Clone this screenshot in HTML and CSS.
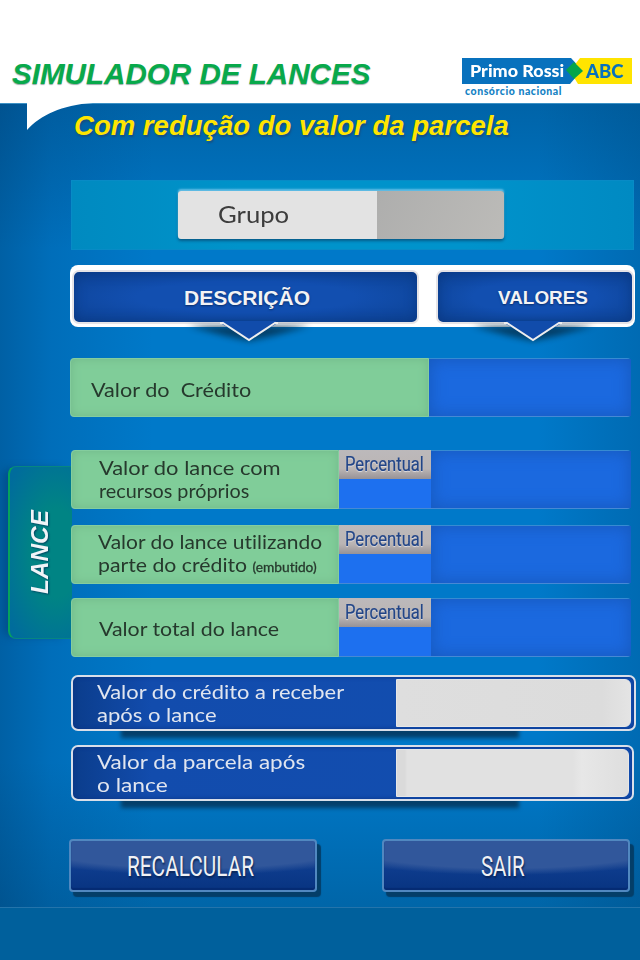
FILE: index.html
```html
<!DOCTYPE html>
<html lang="pt-BR">
<head>
<meta charset="utf-8">
<title>Simulador de Lances</title>
<link rel="stylesheet" href="styles.css">
</head>
<body>
<div class="page">
  <header class="header">
    <h1 class="title">SIMULADOR DE LANCES</h1>
    <div class="brand">
      <div class="brand-bar">
        <svg class="brand-shape" width="171" height="28" viewBox="0 0 171 28">
          <path d="M0 1H109L120 13L108 27H0Z" fill="#0871bd"/>
          <path d="M118 1H170V27H116L108 14Z" fill="#ffe400"/>
          <path d="M112 5L121 14L112 22L104 13Z" fill="#04a54a"/>
        </svg>
        <span class="brand-name">Primo Rossi</span>
        <span class="brand-abc">ABC</span>
      </div>
      <div class="brand-sub">consórcio nacional</div>
    </div>
  </header>

  <main class="stage">
    <svg class="notch" width="66" height="28" viewBox="0 0 66 28"><path d="M0 0H66C34 2 14 12 0 27Z" fill="#fff"/></svg>
    <h2 class="subtitle">Com redução do valor da parcela</h2>

    <section class="group">
      <div class="group-box">
        <div class="group-label"><span>Grupo</span></div>
        <div class="group-value"></div>
      </div>
    </section>

    <section class="heads">
      <div class="head head-desc"><span>DESCRIÇÃO</span>
        <svg class="arrow" width="150" height="26" viewBox="0 0 150 26"><path class="arrow-shadow" d="M14 5H136L98 15L75 20L52 15Z"/><path d="M48 3L75 19L102 3V0H48Z" fill="#114cab"/><path d="M46 2H49L75 19L101 2H104" fill="none" stroke="#eee" stroke-width="2"/></svg>
      </div>
      <div class="head head-val"><span>VALORES</span>
        <svg class="arrow" width="150" height="26" viewBox="0 0 150 26"><path class="arrow-shadow" d="M14 5H136L98 15L75 20L52 15Z"/><path d="M48 3L75 19L102 3V0H48Z" fill="#114cab"/><path d="M46 2H49L75 19L101 2H104" fill="none" stroke="#eee" stroke-width="2"/></svg>
      </div>
    </section>

    <div class="row credit">
      <div class="desc"><span class="t1">Valor do&nbsp; Crédito</span></div>
      <div class="value"></div>
    </div>

    <section class="bids">
      <div class="tab"><span>LANCE</span></div>
      <div class="bid-rows">
        <div class="row first">
          <div class="desc"><span class="t2">Valor do lance com</span><span class="t3">recursos próprios</span></div>
          <div class="percent"><div class="percent-head"><span>Percentual</span></div></div>
          <div class="value"></div>
        </div>
        <div class="row second">
          <div class="desc"><span class="t4">Valor do lance utilizando</span><span class="t5">parte do crédito <small>(embutido)</small></span></div>
          <div class="percent"><div class="percent-head"><span>Percentual</span></div></div>
          <div class="value"></div>
        </div>
        <div class="row third">
          <div class="desc"><span class="t6">Valor total do lance</span></div>
          <div class="percent"><div class="percent-head"><span>Percentual</span></div></div>
          <div class="value"></div>
        </div>
      </div>
    </section>

    <section class="results">
      <div class="result">
        <div class="result-label"><span class="t7">Valor do crédito a receber</span><span class="t8">após o lance</span></div>
        <div class="result-value"></div>
      </div>
      <div class="result result-short">
        <div class="result-label"><span class="t9">Valor da parcela após</span><span class="t10">o lance</span></div>
        <div class="result-value"></div>
      </div>
    </section>

    <div class="actions">
      <button class="btn"><span class="b1">RECALCULAR</span></button>
      <button class="btn"><span class="b2">SAIR</span></button>
    </div>
  </main>
</div>
</body>
</html>
```
FILE: styles.css
```css
* { box-sizing: border-box; }
body { margin: 0; background: #00609c; }
.page { width: 640px; height: 960px; overflow: hidden; font-family: Lato, "Open Sans", sans-serif; font-variant-ligatures: none; }
span { display: inline-block; white-space: nowrap; transform-origin: 0 50%; }

.header { height: 103px; background: #fff; display: flex; justify-content: space-between; padding: 57px 8px 0 12px; }
.title { margin: 0; font: italic bold 29.6px/34px "Liberation Sans", sans-serif; color: #08a94b; text-shadow: 0 1px 1px #9aa; white-space: nowrap; }
.brand { width: 171px; }
.brand-bar { position: relative; height: 28px; display: flex; line-height: 28px; font-weight: 900; }
.brand-shape { position: absolute; left: 1px; top: 0; }
.brand-name { position: relative; width: 116px; margin-left: 9px; font-size: 17px; color: #fff; transform: scaleX(1.055); }
.brand-abc { position: relative; font-size: 18px; color: #0871bd; transform: scaleX(1.03); }
.brand-sub { font-size: 10.5px; line-height: 12px; font-weight: 900; color: #1582c4; padding-left: 4px; white-space: nowrap; letter-spacing: .55px; }

.stage {
  position: relative; height: 805px; border-top: 1px solid #3c91c5; border-bottom: 1px solid #2474ab;
  background:
    linear-gradient(90deg, rgba(0,55,105,.38), rgba(0,65,125,.2) 8%, transparent 24%, transparent 84%, rgba(0,65,115,.26)),
    linear-gradient(180deg, rgba(0,65,115,.38), transparent 18%, transparent 82%, rgba(0,70,115,.38)), #0079c9;
}
.notch { position: absolute; left: 27px; top: -1px; }
.subtitle { margin: 0; padding: 5px 0 0 74px; height: 76px; font: italic bold 27.55px/33px "Liberation Sans", sans-serif; color: #ffe500; text-shadow: 1px 2px 2px #174f80; white-space: nowrap; }

.group { margin-left: 71px; width: 563px; height: 70px; background: linear-gradient(90deg, #008ac0, #0093ca 30%, #0093cc 70%, #008ac2); border: 1px solid #088bc6; padding: 10px 0 0 106px; }
.group-box { width: 326px; height: 48px; display: flex; border-radius: 3px; overflow: hidden; box-shadow: 0 -2px 2px #62bde5, 0 2px 3px #075b88; }
.group-label { width: 199px; background: #e3e3e3; padding-left: 40px; font-size: 24px; line-height: 46px; color: #3d3d3d; }
.group-label span { transform: scaleX(1.07); }
.group-value { flex: 1; background: linear-gradient(115deg, #aeaead, #bcbbb8); }

.heads { margin: 15px 0 0 70px; width: 565px; height: 62px; border-radius: 8px; background: #fff; display: flex; gap: 17px; padding: 5px 2px 0 2px; }
.head { position: relative; flex: none; height: 54px; border: 2px solid #e6e4e7; border-radius: 7px; background: radial-gradient(ellipse at center, #124fb0 45%, #0b3e8b 110%); box-shadow: inset 0 0 12px #0a3985; color: #f3f3f5; font: bold 21px/52px "Liberation Sans", sans-serif; text-shadow: 0 1px 2px #082d6a; }
.head-desc { width: 347px; padding-left: 110px; }
.head-val { width: 198px; padding-left: 60px; font-size: 18.9px; }
.arrow { position: absolute; top: 49px; left: 100px; overflow: visible; }
.head-val .arrow { left: 20px; }
.arrow-shadow { fill: #04304f; opacity: .8; filter: blur(3px); }

.row { display: flex; height: 59px; border-top: 1px solid #378bd2; border-bottom: 1px solid #4689d5; border-radius: 4px; width: 560px; }
.desc { flex: none; display: flex; flex-direction: column; justify-content: center; align-items: flex-start; width: 268px; margin: -1px 0; border: 1px solid #84cd9e; border-radius: 4px 0 0 4px; background: #80cd99; box-shadow: inset 0 0 10px #71b98a; padding-left: 27px; font-size: 19.5px; line-height: 23px; color: #26392d; }
.credit { margin: 31px 0 0 70px; width: 561px; }
.credit .desc { width: 359px; padding-left: 20px; padding-top: 3px; }
.value { flex: 1; background: #1b69df; box-shadow: inset 0 0 16px 1px #1759bd; }
.percent { width: 92px; background: #1d70ef; }
.percent-head { height: 29px; margin-top: -1px; background: linear-gradient(#bcb9bb, #bbb5b4 65%, #969297); padding-left: 6px; font: 19.5px/30px Roboto, sans-serif; color: #224587; text-shadow: 0 1px 1px #e2e0e4; }
.percent-head span { transform: scaleX(.85); -webkit-text-stroke: .2px #224587; }
.desc small { font-size: 12.6px; -webkit-text-stroke: .3px #26392d; }
.t1 { transform: scaleX(1.11); }
.t2 { transform: scaleX(1.124); }
.t3 { transform: scaleX(1.015); }
.t4 { transform: scaleX(1.075); }
.t5 { transform: scaleX(1.09); }
.t6 { transform: scaleX(1.095); }
.t7 { transform: scaleX(1.123); }
.t8 { transform: scaleX(1.13); }
.t9 { transform: scaleX(1.153); }
.t10 { transform: scaleX(1.165); }

.bids { display: flex; margin: 33px 0 0 8px; }
.bid-rows { margin-left: -1px; position: relative; }
.tab { flex: none; width: 64px; height: 173px; margin-top: 16px; padding-right: 3px; border: 1px solid #078681; border-left: 2px solid #05a35d; border-right: 0; border-radius: 8px 0 0 8px; background: radial-gradient(ellipse 60px 110px at 75% 50%, #008484 40%, transparent), #006c9c; display: flex; align-items: center; justify-content: center; box-shadow: -8px 0 8px -3px #00508c; }
.tab span { writing-mode: vertical-rl; transform: rotate(180deg); transform-origin: center; font: italic bold 24.4px/28px "Liberation Sans", sans-serif; color: #f1f4f8; text-shadow: -1px 1px 2px #024560; }
.first .desc { padding-bottom: 2px; }
.second { margin-top: 16px; }
.third { margin-top: 14px; }
.second .desc { padding-left: 26px; }
.third .desc { padding-top: 2px; }

.results { isolation: isolate; margin: 18px 0 0 71px; display: flex; flex-direction: column; gap: 14px; }
.result { position: relative; width: 565px; height: 56px; border: 2px solid #d9dfe9; border-radius: 7px; background: linear-gradient(90deg, #0b3d8c, #124cad 14%, #124eb0); display: flex; box-shadow: inset 0 0 4px #0a3484; }
.result::before { content: ""; position: absolute; z-index: -1; left: 48px; width: 398px; top: 46px; height: 15px; background: #043f6a; filter: blur(2px); }
.result-short { width: 563px; }
.result-label { width: 323px; padding: 3px 0 0 24px; font-size: 19.5px; line-height: 23px; color: #e0e5ef; display: flex; flex-direction: column; align-items: flex-start; }
.result-value { flex: 1; margin: 2px 3px 2px 0; border-radius: 0 6px 6px 0; background: linear-gradient(90deg, #dedede, #dcdcdc 88%, #e4e4e4); border: 1px solid #e7e7e7; }
.result-short .result-value { background: linear-gradient(90deg, #dadada 8px, #e1e1e1 10px, #e1e1e1 76%, #e7e7e7 80%, #dedede); }

.actions { display: flex; gap: 65px; margin: 38px 0 0 69px; }
.btn { width: 248px; height: 53px; padding: 0; border: 2px solid #5188c0; border-radius: 4px; background: radial-gradient(ellipse 210px 34px at 50% 0, #31579b 80%, transparent 100%), linear-gradient(#254c98, #0d3b8c 60%, #083481); box-shadow: 4px 5px 1px #043e68, inset 0 -2px 1px #052b73; color: #f0f1f4; font: 27px/48px Roboto, sans-serif; text-shadow: 1px 2px 2px #082558; }
.btn span { transform-origin: center; }
.b1 { transform: translate(-3px, 1px) scaleX(.77); }
.b2 { transform: translate(-3px, 1px) scaleX(.76); }
```
